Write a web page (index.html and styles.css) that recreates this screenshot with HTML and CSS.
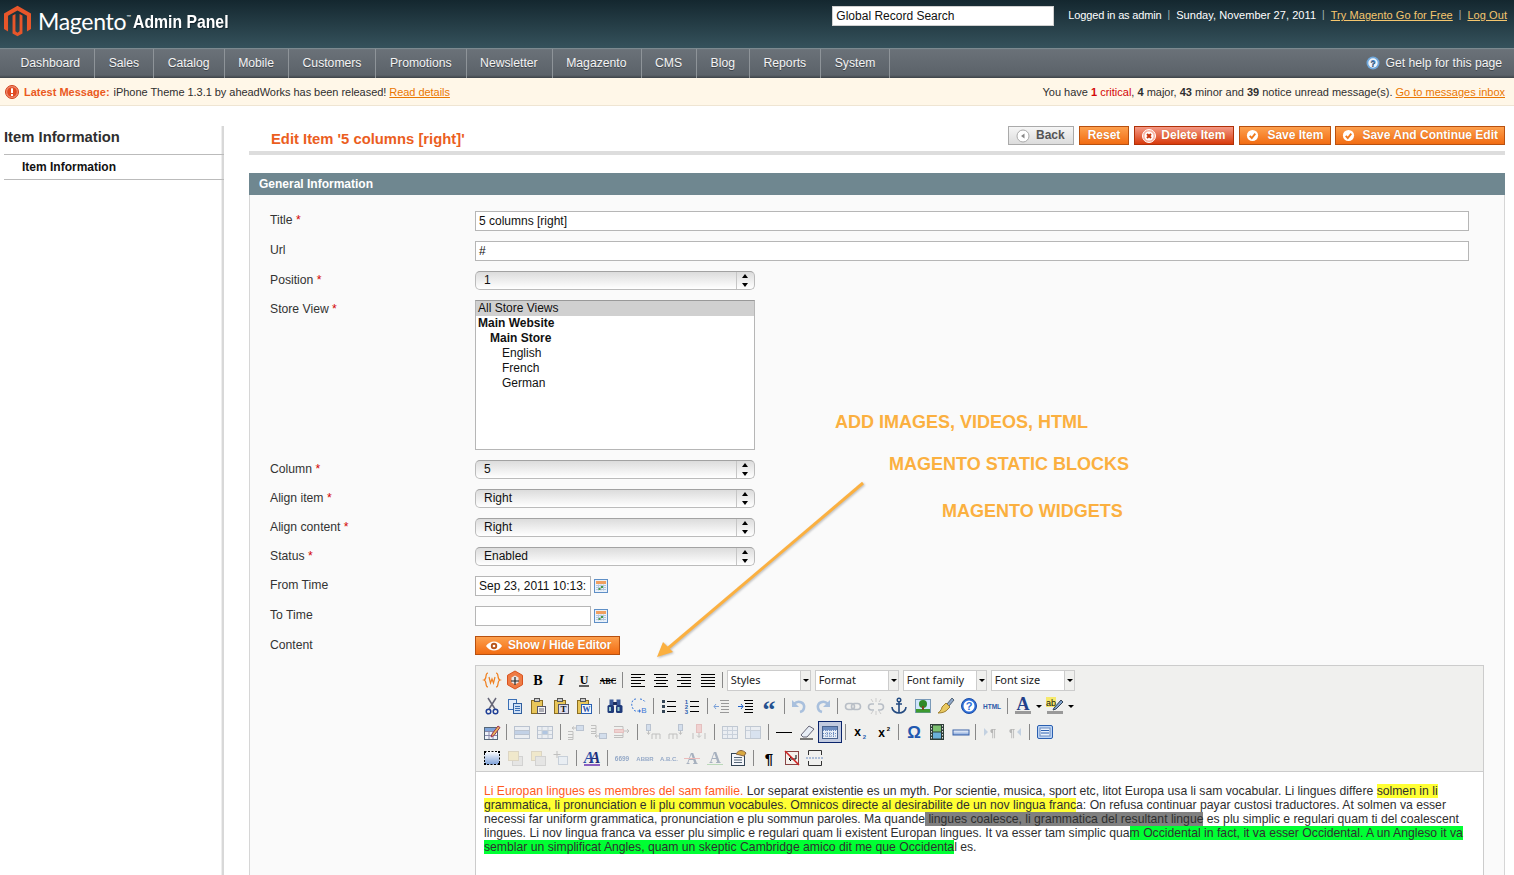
FILE: index.html
```html
<!DOCTYPE html>
<html lang="en">
<head>
<meta charset="utf-8">
<title>Magento Admin Panel</title>
<link rel="stylesheet" href="styles.css">
</head>
<body>
<svg class="sprites" width="0" height="0" aria-hidden="true">
<defs>
<linearGradient id="gb" x1="0" y1="0" x2="0" y2="1"><stop offset="0" stop-color="#ffffff"/><stop offset="1" stop-color="#7da0d8"/></linearGradient>
<symbol id="i-widget" viewBox="0 0 20 20"><g fill="none" stroke="#f08020" stroke-width="1.2"><path d="M6 3C2.500 3 5.500 9 2 10C5.500 11 2.500 17 6 17"/><path d="M14 3C17.500 3 14.500 9 18 10C14.500 11 17.500 17 14 17"/><path d="M7 7l1.500 6 1.500-4 1.500 4 1.500-6"/></g></symbol>
<symbol id="i-mage" viewBox="0 0 20 20"><path d="M10 1l7.500 4.300v9.400L10 19l-7.500-4.300V5.300z" fill="#ee7b45" stroke="#d9531e"/><path d="M10 5.500l3.500 2v5l-3.500 2-3.500-2v-5z" fill="#e8e8e8"/><path d="M10 7v8M6 11h8" stroke="#222" stroke-width="1.200"/></symbol>
<symbol id="i-b" viewBox="0 0 20 20"><text x="10" y="15" text-anchor="middle" class="g-b">B</text></symbol>
<symbol id="i-i" viewBox="0 0 20 20"><text x="10" y="15" text-anchor="middle" class="g-i">I</text></symbol>
<symbol id="i-u" viewBox="0 0 20 20"><text x="10" y="13.500" text-anchor="middle" class="g-u">U</text><path d="M5 16h10" stroke="#000" stroke-width="1.200"/></symbol>
<symbol id="i-s" viewBox="0 0 20 20"><text x="10" y="13.500" text-anchor="middle" class="g-s">ABC</text><path d="M2 10.500h16" stroke="#000"/></symbol>
<symbol id="i-al" viewBox="0 0 20 20"><path d="M3 4.500h14M3 7.500h10M3 10.500h14M3 13.500h10M3 16.500h14" stroke="#000"/></symbol>
<symbol id="i-ac" viewBox="0 0 20 20"><path d="M3 4.500h14M5 7.500h10M3 10.500h14M5 13.500h10M3 16.500h14" stroke="#000"/></symbol>
<symbol id="i-ar" viewBox="0 0 20 20"><path d="M3 4.500h14M7 7.500h10M3 10.500h14M7 13.500h10M3 16.500h14" stroke="#000"/></symbol>
<symbol id="i-aj" viewBox="0 0 20 20"><path d="M3 4.500h14M3 7.500h14M3 10.500h14M3 13.500h14M3 16.500h14" stroke="#000"/></symbol>
<symbol id="i-cut" viewBox="0 0 20 20"><path d="M6 2l7 11M14 2L7 13" stroke="#667" stroke-width="1.500"/><circle cx="6.500" cy="15.500" r="2.300" fill="none" stroke="#1f3f96" stroke-width="1.500"/><circle cx="13.500" cy="15.500" r="2.300" fill="none" stroke="#1f3f96" stroke-width="1.500"/></symbol>
<symbol id="i-copy" viewBox="0 0 20 20"><rect x="3.500" y="3.500" width="8" height="10" fill="#e3edfa" stroke="#3a6fb5"/><rect x="8.500" y="7.500" width="8" height="10" fill="#cfe0f6" stroke="#2f5e9e"/><path d="M10 10.500h5M10 12.500h5M10 14.500h5" stroke="#3a6fb5"/></symbol>
<symbol id="i-paste" viewBox="0 0 20 20"><rect x="3.500" y="4.500" width="11" height="13" fill="#e8c65a" stroke="#8a6d20"/><rect x="6.500" y="2.500" width="5" height="3" fill="#ccc" stroke="#555"/><rect x="9.500" y="10.500" width="8" height="7" fill="#f4f4f4" stroke="#556"/><path d="M11 13h5M11 15h5" stroke="#667"/></symbol>
<symbol id="i-pastet" viewBox="0 0 20 20"><rect x="3.500" y="4.500" width="11" height="13" fill="#e8c65a" stroke="#8a6d20"/><rect x="6.500" y="2.500" width="5" height="3" fill="#ccc" stroke="#555"/><rect x="7.500" y="8.500" width="10" height="9" fill="#dde" stroke="#556"/><text x="12.500" y="16" text-anchor="middle" class="g-t">T</text></symbol>
<symbol id="i-pastew" viewBox="0 0 20 20"><rect x="3.500" y="4.500" width="11" height="13" fill="#e8c65a" stroke="#8a6d20"/><rect x="6.500" y="2.500" width="5" height="3" fill="#ccc" stroke="#555"/><rect x="7.500" y="8.500" width="10" height="9" fill="#f2f6fd" stroke="#2a5fb0"/><text x="12.500" y="16" text-anchor="middle" class="g-w">W</text></symbol>
<symbol id="i-find" viewBox="0 0 20 20"><rect x="4.500" y="3.500" width="4" height="6" fill="#3a5a9a"/><rect x="11.500" y="3.500" width="4" height="6" fill="#3a5a9a"/><rect x="8" y="6" width="4" height="3" fill="#1d2f60"/><rect x="2.500" y="9" width="6.500" height="8" rx="1.500" fill="#1f3a7a"/><rect x="11" y="9" width="6.500" height="8" rx="1.500" fill="#1f3a7a"/><rect x="4" y="11" width="2" height="4" fill="#9cc"/><rect x="12.500" y="11" width="2" height="4" fill="#9cc"/></symbol>
<symbol id="i-repl" viewBox="0 0 20 20"><path d="M8 3C3 3 2 11 7 15h5M12 3c2 0 4 1 5 3" fill="none" stroke="#3a78d8" stroke-dasharray="2 1.500"/><path d="M11 13l2 2-2 2z" fill="#3a78d8"/><text x="16" y="17" text-anchor="middle" class="g-bl">B</text></symbol>
<symbol id="i-ul" viewBox="0 0 20 20"><rect x="3" y="4" width="3" height="3" fill="#345"/><rect x="3" y="9" width="3" height="3" fill="#345"/><rect x="3" y="14" width="3" height="3" fill="#345"/><path d="M8 5.500h9M8 10.500h9M8 15.500h9" stroke="#000"/></symbol>
<symbol id="i-ol" viewBox="0 0 20 20"><text x="4.500" y="8" text-anchor="middle" class="g-n">1</text><text x="4.500" y="13" text-anchor="middle" class="g-n">2</text><text x="4.500" y="18" text-anchor="middle" class="g-n">3</text><path d="M8 5.500h9M8 10.500h9M8 15.500h9" stroke="#000"/></symbol>
<symbol id="i-out" viewBox="0 0 20 20"><path d="M8 4.500h9M9 7.500h8M9 10.500h8M9 13.500h8M8 16.500h9" stroke="#999"/><path d="M7 10.500H2M4 8l-2 2.500L4 13" fill="none" stroke="#7aa0d8"/></symbol>
<symbol id="i-ind" viewBox="0 0 20 20"><path d="M8 4.500h9M9 7.500h8M9 10.500h8M9 13.500h8M8 16.500h9" stroke="#000"/><path d="M2 10.500h5M5 8l2 2.500L5 13" fill="none" stroke="#1e60c8"/></symbol>
<symbol id="i-quote" viewBox="0 0 20 20"><text x="10" y="22" text-anchor="middle" class="g-q">“</text></symbol>
<symbol id="i-undo" viewBox="0 0 20 20"><path d="M5 8c4-4 11-2 10 4-.3 2-2 3.500-4 4" fill="none" stroke="#a9c0dd" stroke-width="2.500"/><path d="M3 4v7h7z" fill="#a9c0dd"/></symbol>
<symbol id="i-redo" viewBox="0 0 20 20"><path d="M15 8C11 4 4 6 5 12c.3 2 2 3.500 4 4" fill="none" stroke="#a9c0dd" stroke-width="2.500"/><path d="M17 4v7h-7z" fill="#a9c0dd"/></symbol>
<symbol id="i-link" viewBox="0 0 20 20"><rect x="2.500" y="7.500" width="9" height="6" rx="3" fill="none" stroke="#b8bec6" stroke-width="1.600"/><rect x="8.500" y="7.500" width="9" height="6" rx="3" fill="none" stroke="#b8bec6" stroke-width="1.600"/></symbol>
<symbol id="i-unlink" viewBox="0 0 20 20"><path d="M8 8H5.500a2.500 2.500 0 0 0 0 6H8M12 8h2.500a2.500 2.500 0 0 1 0 6H12" fill="none" stroke="#b8bec6" stroke-width="1.600"/><path d="M10 2v4M5 3l2 3M15 3l-2 3M10 15v4M5 18l2-3M15 18l-2-3" stroke="#ccc"/></symbol>
<symbol id="i-anchor" viewBox="0 0 20 20"><circle cx="10" cy="4" r="1.800" fill="none" stroke="#234a80" stroke-width="1.400"/><path d="M10 6v11M7 8h6M3 11c0 4 4 6 7 6s7-2 7-6" fill="none" stroke="#234a80" stroke-width="1.600"/></symbol>
<symbol id="i-image" viewBox="0 0 20 20"><rect x="2.500" y="3.500" width="15" height="13" fill="#cfe6fb" stroke="#7a9ab8"/><rect x="3" y="13" width="14" height="3.500" fill="#3c9a30"/><circle cx="10" cy="8" r="4" fill="#2f8a25"/><rect x="9" y="10" width="2" height="4" fill="#7a4a20"/></symbol>
<symbol id="i-clean" viewBox="0 0 20 20"><path d="M11 8l5-6 2 2-5 6z" fill="#8fa7c8" stroke="#567"/><path d="M10 7l4 4-2 2c-2 3-6 4-10 4 3-2 4-5 4-6z" fill="#e8c860" stroke="#a08030"/></symbol>
<symbol id="i-help" viewBox="0 0 20 20"><circle cx="10" cy="10" r="7.500" fill="#2f6fd8" stroke="#1c4ea8"/><circle cx="10" cy="10" r="5.500" fill="#fff"/><text x="10" y="14" text-anchor="middle" class="g-h">?</text></symbol>
<symbol id="i-html" viewBox="0 0 20 20"><text x="10" y="12.500" text-anchor="middle" class="g-html">HTML</text></symbol>
<symbol id="i-fore" viewBox="0 0 20 20"><text x="10" y="14" text-anchor="middle" class="g-a">A</text><rect x="2" y="15" width="16" height="3" fill="#999"/></symbol>
<symbol id="i-back" viewBox="0 0 20 20"><rect x="1" y="1" width="10" height="10" fill="#f6e96c"/><text x="6" y="9.500" text-anchor="middle" class="g-ab">ab</text><path d="M9 12l7-8 2 2-7 7-3 1z" fill="#7fa3cf" stroke="#345"/><rect x="2" y="15" width="16" height="3" fill="#999"/></symbol>
<symbol id="i-table" viewBox="0 0 20 20"><rect x="2.500" y="5.500" width="13" height="12" fill="#eef3fa" stroke="#567"/><path d="M3 9.500h12M3 13.500h12M7 6v11M11 6v11" stroke="#88a"/><rect x="3" y="6" width="12" height="3" fill="#7ea4d8"/><path d="M10 12l6-8 2 1.500-6 8-3 1.500z" fill="#e8b458" stroke="#935"/></symbol>
<symbol id="i-rowp" viewBox="0 0 20 20"><rect x="2.500" y="4.500" width="15" height="12" fill="#e8eef6" stroke="#8fa0b8"/><rect x="3" y="8.500" width="14" height="4" fill="#9db8e0"/><path d="M3 8.500h14M3 12.500h14" stroke="#8fa0b8"/></symbol>
<symbol id="i-cellp" viewBox="0 0 20 20"><rect x="2.500" y="4.500" width="15" height="12" fill="#e8eef6" stroke="#8fa0b8"/><rect x="7" y="8.500" width="6" height="4" fill="#7ea4d8"/><path d="M3 8.500h14M3 12.500h14M7 5v11M13 5v11" stroke="#a8b6c8"/></symbol>
<symbol id="i-rb" viewBox="0 0 20 20"><rect x="10.500" y="3.500" width="7" height="5" fill="#bcd0ec" stroke="#8fa0b8"/><path d="M10 6H6M8 4.500L6 6l2 1.500" fill="none" stroke="#999"/><path d="M2 9.500h5v3H2m0 0h5v3H2m0 0h5v2H2" fill="none" stroke="#999"/></symbol>
<symbol id="i-ra" viewBox="0 0 20 20"><path d="M2 3.500h5v3H2m0 0h5v3H2m0 0h5v2H2" fill="none" stroke="#999"/><path d="M10 14H6M8 12.500L6 14l2 1.500" fill="none" stroke="#999"/><rect x="10.500" y="11.500" width="7" height="5" fill="#bcd0ec" stroke="#8fa0b8"/></symbol>
<symbol id="i-rd" viewBox="0 0 20 20"><path d="M2 4.500h9v3H2m0 3h9v3H2m0 0h9v2H2" fill="none" stroke="#999"/><rect x="2.500" y="7.500" width="9" height="3" fill="#f0b8b8" stroke="#d99"/><path d="M12 9h5M15 7l2 2-2 2" fill="none" stroke="#999"/></symbol>
<symbol id="i-cb" viewBox="0 0 20 20"><rect x="3.500" y="2.500" width="4" height="6" fill="#bcd0ec" stroke="#8fa0b8"/><path d="M5.500 9v3M4 10.500l1.500 2 1.500-2" fill="none" stroke="#999"/><path d="M9 17v-5h8v5M13 12v5" fill="none" stroke="#999"/></symbol>
<symbol id="i-ca" viewBox="0 0 20 20"><rect x="12.500" y="2.500" width="4" height="6" fill="#bcd0ec" stroke="#8fa0b8"/><path d="M14.500 9v3M13 10.500l1.500 2 1.500-2" fill="none" stroke="#999"/><path d="M3 17v-5h8v5M7 12v5" fill="none" stroke="#999"/></symbol>
<symbol id="i-cd" viewBox="0 0 20 20"><rect x="7.500" y="2.500" width="5" height="8" fill="#f0b8b8" stroke="#d99"/><path d="M10 11v4M8 13.500l2 2 2-2M4 11v6M16 11v6" fill="none" stroke="#999"/></symbol>
<symbol id="i-split" viewBox="0 0 20 20"><rect x="2.500" y="4.500" width="15" height="12" fill="#e8eef6" stroke="#9aa8bc"/><path d="M3 8.500h14M3 12.500h14M7.500 5v11M12.500 5v11" stroke="#aab8cc"/></symbol>
<symbol id="i-merge" viewBox="0 0 20 20"><rect x="2.500" y="4.500" width="15" height="12" fill="#e8eef6" stroke="#9aa8bc"/><rect x="7" y="8" width="10" height="8" fill="#c6d8f0"/><path d="M3 8.500h14M7.500 5v11" stroke="#aab8cc"/></symbol>
<symbol id="i-hr" viewBox="0 0 20 20"><path d="M2 10.500h16" stroke="#000"/></symbol>
<symbol id="i-erase" viewBox="0 0 20 20"><path d="M4 13l8-9 5 3-7 8H6z" fill="#e8eef6" stroke="#667"/><path d="M3 17h13" stroke="#000"/></symbol>
<symbol id="i-visual" viewBox="0 0 20 20"><rect x="2.500" y="4.500" width="15" height="12" fill="#e8eef6" stroke="#48638f"/><rect x="3" y="5" width="14" height="3" fill="#6c8cc0"/><path d="M3 8.500h14M3 11.500h14M3 14h14M7 8v8M10 8v8M13.500 8v8" stroke="#6c8cc0" stroke-dasharray="1 1"/></symbol>
<symbol id="i-sub" viewBox="0 0 20 20"><text x="7.500" y="14" text-anchor="middle" class="g-x">x</text><text x="14.500" y="17" text-anchor="middle" class="g-sm">2</text></symbol>
<symbol id="i-sup" viewBox="0 0 20 20"><text x="7.500" y="15" text-anchor="middle" class="g-x">x</text><text x="14.500" y="9" text-anchor="middle" class="g-smk">2</text></symbol>
<symbol id="i-omega" viewBox="0 0 20 20"><text x="10" y="15.500" text-anchor="middle" class="g-o">Ω</text></symbol>
<symbol id="i-film" viewBox="0 0 20 20"><rect x="3" y="2" width="14" height="16" fill="#2e3e38"/><rect x="6" y="3.500" width="8" height="6" fill="#7cc070"/><rect x="6" y="10.500" width="8" height="6" fill="#6ab0d8"/><path d="M4.500 3v14M15.500 3v14" stroke="#ddd" stroke-dasharray="1.500 1.500"/></symbol>
<symbol id="i-rule" viewBox="0 0 20 20"><rect x="2" y="8" width="16" height="5" fill="url(#gb)" stroke="#3a63a8"/></symbol>
<symbol id="i-ltr" viewBox="0 0 20 20"><text x="12" y="14.500" text-anchor="middle" class="g-pg">¶</text><path d="M3 6l4 4-4 4z" fill="#9fb8d8"/></symbol>
<symbol id="i-rtl" viewBox="0 0 20 20"><text x="8" y="14.500" text-anchor="middle" class="g-pg">¶</text><path d="M17 6l-4 4 4 4z" fill="#9fb8d8"/></symbol>
<symbol id="i-box" viewBox="0 0 20 20"><rect x="2.500" y="3.500" width="15" height="13" rx="1.500" fill="#bcd4f4" stroke="#2a5fb0"/><rect x="5" y="6" width="10" height="8" fill="#eaf2fc" stroke="#6c8cc0"/><path d="M6 8.500h8M6 11h8" stroke="#2a5fb0"/></symbol>
<symbol id="i-full" viewBox="0 0 20 20"><rect x="2.500" y="3.500" width="15" height="13" fill="url(#gb)" stroke="#000" stroke-dasharray="2 1.500"/><path d="M2 3h2v2H2zM16 3h2v2h-2zM2 15h2v2H2zM16 15h2v2h-2z" fill="#000"/></symbol>
<symbol id="i-lf" viewBox="0 0 20 20"><rect x="7.500" y="8.500" width="10" height="9" fill="#ddd" stroke="#bbb"/><rect x="3.500" y="3.500" width="10" height="9" fill="#f0e2b0" stroke="#ccc0a0"/></symbol>
<symbol id="i-lb" viewBox="0 0 20 20"><rect x="3.500" y="3.500" width="10" height="9" fill="#f0e2b0" stroke="#ccc0a0"/><rect x="7.500" y="8.500" width="10" height="9" fill="#ddd" stroke="#bbb"/></symbol>
<symbol id="i-abs" viewBox="0 0 20 20"><path d="M6 3v7M2.500 6.500h7" stroke="#999"/><rect x="7.500" y="8.500" width="9" height="8" fill="#e4edf8" stroke="#a8b6c8"/></symbol>
<symbol id="i-style" viewBox="0 0 20 20"><text x="7" y="15" text-anchor="middle" class="g-st1">A</text><text x="13" y="15" text-anchor="middle" class="g-st2">A</text><path d="M2 17h16" stroke="#6a30b0" stroke-width="1.500"/></symbol>
<symbol id="i-cite" viewBox="0 0 20 20"><text x="10" y="13" text-anchor="middle" class="g-cap">6699</text></symbol>
<symbol id="i-abbr" viewBox="0 0 20 20"><text x="10" y="12.500" text-anchor="middle" class="g-cap2">ABBR</text></symbol>
<symbol id="i-acr" viewBox="0 0 20 20"><text x="10" y="12.500" text-anchor="middle" class="g-cap2">A.B.C.</text></symbol>
<symbol id="i-del" viewBox="0 0 20 20"><text x="10" y="15.500" text-anchor="middle" class="g-ga">A</text><path d="M2 10.500h16" stroke="#e89090"/></symbol>
<symbol id="i-ins" viewBox="0 0 20 20"><text x="10" y="15" text-anchor="middle" class="g-ga">A</text><path d="M2 16.500h16" stroke="#90c890"/></symbol>
<symbol id="i-attr" viewBox="0 0 20 20"><rect x="3.500" y="5.500" width="13" height="12" fill="#f4f6fa" stroke="#345"/><path d="M6 9.500h8M6 12h8M6 14.500h8" stroke="#567"/><path d="M8 6c3-5 7-4 10-1l-2 3z" fill="#d8a840" stroke="#864"/></symbol>
<symbol id="i-para" viewBox="0 0 20 20"><text x="10" y="16" text-anchor="middle" class="g-p">¶</text></symbol>
<symbol id="i-nb" viewBox="0 0 20 20"><rect x="3.500" y="3.500" width="13" height="13" fill="#f4f0ec" stroke="#844"/><path d="M14 7v4H7M9 9l-2 2 2 2" fill="none" stroke="#000"/><path d="M3 3l14 14" stroke="#d02020" stroke-width="1.500"/></symbol>
<symbol id="i-break" viewBox="0 0 20 20"><path d="M3.500 7V2.500h13V7M3.500 13v4.500h13V13" fill="none" stroke="#333"/><path d="M1 10h18" stroke="#6c8cc0" stroke-dasharray="2 1"/></symbol>
<symbol id="i-cal" viewBox="0 0 14 14"><rect x=".5" y=".5" width="13" height="13" fill="#eaf1fa" stroke="#5f8fc6"/><rect x="2" y="2" width="10" height="3" fill="#f0a060"/><path d="M2 6.500h10M2 8.500h10M2 10.500h10M4.500 5.500v6M7 5.500v6M9.500 5.500v6" stroke="#b4c8dc"/><rect x="7" y="7" width="2" height="2" fill="#4a9a48"/><rect x="4.500" y="9" width="2" height="2" fill="#4a9a48"/></symbol>
<symbol id="i-ok" viewBox="0 0 14 14"><circle cx="7" cy="7" r="6" fill="#fff"/><path d="M4 7.500l2.200 2.200L10 5" fill="none" stroke="#f07a1e" stroke-width="2"/></symbol>
</defs>
</svg>

<header class="topbar">
  <div class="brand">
    <svg class="brand-mark" viewBox="0 0 30 34" width="27" height="32" aria-hidden="true"><path d="M15 0l15 8.600V26l-4.500 2.600V11.200L15 5.200 4.500 11.200v17.400L0 26V8.600z" fill="#e8562a"/><path d="M15 34l-5.500-3V11l3.200-1.800v19.300L15 30l2.300-1.500V9.200l3.200 1.800v20z" fill="#e8562a"/></svg>
    <span class="brand-name">Magento<sup class="tm">™</sup></span>
    <span class="brand-sub">Admin Panel</span>
  </div>
  <div class="top-right">
    <div class="search-box">Global Record Search</div>
    <div class="top-links">
      <span class="tight">Logged in as admin</span><i class="pipe">|</i><span>Sunday, November 27, 2011</span><i class="pipe">|</i><a href="#">Try Magento Go for Free</a><i class="pipe">|</i><a href="#">Log Out</a>
    </div>
  </div>
</header>

<nav class="navbar">
  <ul class="menu">
    <li>Dashboard</li><li>Sales</li><li>Catalog</li><li>Mobile</li><li>Customers</li><li>Promotions</li><li>Newsletter</li><li>Magazento</li><li>CMS</li><li>Blog</li><li>Reports</li><li>System</li>
  </ul>
  <div class="nav-help">
    <svg viewBox="0 0 14 14" width="14" height="14" aria-hidden="true"><circle cx="7" cy="7" r="6.500" fill="#6fa8dc"/><circle cx="7" cy="7" r="4.700" fill="#eef4fb"/><text x="7" y="10.300" text-anchor="middle" class="g-help">?</text></svg>
    <span>Get help for this page</span>
  </div>
</nav>

<div class="notice">
  <div class="notice-left">
    <svg viewBox="0 0 14 14" width="14" height="14" aria-hidden="true"><circle cx="7" cy="7" r="6.500" fill="#f08a70" stroke="#d0421c"/><circle cx="7" cy="7" r="4.800" fill="#e04a22"/><rect x="6" y="3.300" width="2" height="4.700" fill="#fff"/><rect x="6" y="9" width="2" height="2" fill="#fff"/></svg>
    <b class="latest">Latest Message:</b>
    <span>iPhone Theme 1.3.1 by aheadWorks has been released!</span>
    <a href="#">Read details</a>
  </div>
  <div class="notice-right">
    You have <b class="crit">1</b> <span class="crit">critical</span>, <b>4</b> major, <b>43</b> minor and <b>39</b> notice unread message(s). <a href="#">Go to messages inbox</a>
  </div>
</div>

<div class="layout">
  <aside class="sidebar">
    <h3 class="side-title">Item Information</h3>
    <div class="side-item">Item Information</div>
  </aside>

  <main class="main">
    <div class="page-head">
      <h1 class="page-title">Edit Item '5 columns [right]'</h1>
      <div class="actions">
        <button class="btn btn-back" type="button"><svg viewBox="0 0 14 14" width="14" height="14" aria-hidden="true"><circle cx="7" cy="7" r="6" fill="#fff" stroke="#aaa"/><path d="M8.500 4.500v5L5 7z" fill="#888"/></svg>Back</button>
        <button class="btn btn-reset" type="button">Reset</button>
        <button class="btn btn-del" type="button"><svg viewBox="0 0 14 14" width="14" height="14" aria-hidden="true"><circle cx="7" cy="7" r="6.500" fill="#f8b0a0" stroke="#fff"/><circle cx="7" cy="7" r="4.500" fill="#fff"/><path d="M5 5l4 4M9 5l-4 4" stroke="#c8340c" stroke-width="2"/></svg>Delete Item</button>
        <button class="btn btn-ico" type="button"><svg width="13" height="13" aria-hidden="true"><use href="#i-ok"/></svg>Save Item</button>
        <button class="btn btn-ico btn-last" type="button"><svg width="13" height="13" aria-hidden="true"><use href="#i-ok"/></svg>Save And Continue Edit</button>
      </div>
    </div>

    <section class="section">
      <h2 class="section-title">General Information</h2>
      <div class="fieldset">
        <div class="row"><label class="lbl">Title <em>*</em></label><div class="field input wide">5 columns [right]</div></div>
        <div class="row"><label class="lbl">Url</label><div class="field input wide">#</div></div>
        <div class="row r-sel"><label class="lbl">Position <em>*</em></label><div class="field select"><span>1</span><i class="updown"></i></div></div>
        <div class="row r-multi"><label class="lbl">Store View <em>*</em></label>
          <div class="field multi">
            <div class="opt sel">All Store Views</div>
            <div class="opt bold">Main Website</div>
            <div class="opt bold in1">Main Store</div>
            <div class="opt in2">English</div>
            <div class="opt in2">French</div>
            <div class="opt in2">German</div>
          </div>
        </div>
        <div class="row r-sel"><label class="lbl">Column <em>*</em></label><div class="field select"><span>5</span><i class="updown"></i></div></div>
        <div class="row r-sel"><label class="lbl">Align item <em>*</em></label><div class="field select"><span>Right</span><i class="updown"></i></div></div>
        <div class="row r-sel"><label class="lbl">Align content <em>*</em></label><div class="field select"><span>Right</span><i class="updown"></i></div></div>
        <div class="row r-sel"><label class="lbl">Status <em>*</em></label><div class="field select"><span>Enabled</span><i class="updown"></i></div></div>
        <div class="row"><label class="lbl">From Time</label><div class="field input date">Sep 23, 2011 10:13:</div><svg class="cal" width="14" height="14" aria-hidden="true"><use href="#i-cal"/></svg></div>
        <div class="row"><label class="lbl">To Time</label><div class="field input date"></div><svg class="cal" width="14" height="14" aria-hidden="true"><use href="#i-cal"/></svg></div>
        <div class="row r-sel"><label class="lbl">Content</label>
          <button class="btn btn-editor" type="button"><svg viewBox="0 0 18 12" width="18" height="12" aria-hidden="true"><path d="M1 6c4-6 12-6 16 0-4 6-12 6-16 0z" fill="#fff"/><circle cx="9" cy="6" r="3.200" fill="#b8541a"/><circle cx="9" cy="6" r="1.300" fill="#fff"/></svg>Show / Hide Editor</button>
        </div>
        <div class="row r-editor"><span class="lbl"></span>
          <div class="editor">
            <div class="toolbar">
              <div class="tb-row">
                <span class="ti"><svg><use href="#i-widget"/></svg></span><span class="ti"><svg><use href="#i-mage"/></svg></span><span class="ti"><svg><use href="#i-b"/></svg></span><span class="ti"><svg><use href="#i-i"/></svg></span><span class="ti"><svg><use href="#i-u"/></svg></span><span class="ti"><svg><use href="#i-s"/></svg></span><i class="sep"></i>
                <span class="ti"><svg><use href="#i-al"/></svg></span><span class="ti"><svg><use href="#i-ac"/></svg></span><span class="ti"><svg><use href="#i-ar"/></svg></span><span class="ti"><svg><use href="#i-aj"/></svg></span><i class="sep"></i>
                <span class="combo"><span class="combo-text">Styles</span><i class="combo-arrow"></i></span><span class="combo"><span class="combo-text">Format</span><i class="combo-arrow"></i></span><span class="combo"><span class="combo-text">Font family</span><i class="combo-arrow"></i></span><span class="combo"><span class="combo-text">Font size</span><i class="combo-arrow"></i></span>
              </div>
              <div class="tb-row">
                <span class="ti"><svg><use href="#i-cut"/></svg></span><span class="ti"><svg><use href="#i-copy"/></svg></span><span class="ti"><svg><use href="#i-paste"/></svg></span><span class="ti"><svg><use href="#i-pastet"/></svg></span><span class="ti"><svg><use href="#i-pastew"/></svg></span><i class="sep"></i>
                <span class="ti"><svg><use href="#i-find"/></svg></span><span class="ti"><svg><use href="#i-repl"/></svg></span><i class="sep"></i>
                <span class="ti"><svg><use href="#i-ul"/></svg></span><span class="ti"><svg><use href="#i-ol"/></svg></span><i class="sep"></i>
                <span class="ti"><svg><use href="#i-out"/></svg></span><span class="ti"><svg><use href="#i-ind"/></svg></span><span class="ti"><svg><use href="#i-quote"/></svg></span><i class="sep"></i>
                <span class="ti"><svg><use href="#i-undo"/></svg></span><span class="ti"><svg><use href="#i-redo"/></svg></span><i class="sep"></i>
                <span class="ti"><svg><use href="#i-link"/></svg></span><span class="ti"><svg><use href="#i-unlink"/></svg></span><span class="ti"><svg><use href="#i-anchor"/></svg></span><span class="ti"><svg><use href="#i-image"/></svg></span><span class="ti"><svg><use href="#i-clean"/></svg></span><span class="ti"><svg><use href="#i-help"/></svg></span><span class="ti"><svg><use href="#i-html"/></svg></span><i class="sep"></i>
                <span class="ti split"><svg><use href="#i-fore"/></svg><i class="drop"></i></span><span class="ti split"><svg><use href="#i-back"/></svg><i class="drop"></i></span>
              </div>
              <div class="tb-row">
                <span class="ti"><svg><use href="#i-table"/></svg></span><i class="sep"></i>
                <span class="ti off"><svg><use href="#i-rowp"/></svg></span><span class="ti off"><svg><use href="#i-cellp"/></svg></span><i class="sep"></i>
                <span class="ti off"><svg><use href="#i-rb"/></svg></span><span class="ti off"><svg><use href="#i-ra"/></svg></span><span class="ti off"><svg><use href="#i-rd"/></svg></span><i class="sep"></i>
                <span class="ti off"><svg><use href="#i-cb"/></svg></span><span class="ti off"><svg><use href="#i-ca"/></svg></span><span class="ti off"><svg><use href="#i-cd"/></svg></span><i class="sep"></i>
                <span class="ti off"><svg><use href="#i-split"/></svg></span><span class="ti off"><svg><use href="#i-merge"/></svg></span><i class="sep"></i>
                <span class="ti"><svg><use href="#i-hr"/></svg></span><span class="ti"><svg><use href="#i-erase"/></svg></span><span class="ti active"><svg><use href="#i-visual"/></svg></span><i class="sep"></i>
                <span class="ti"><svg><use href="#i-sub"/></svg></span><span class="ti"><svg><use href="#i-sup"/></svg></span><i class="sep"></i>
                <span class="ti"><svg><use href="#i-omega"/></svg></span><span class="ti"><svg><use href="#i-film"/></svg></span><span class="ti"><svg><use href="#i-rule"/></svg></span><i class="sep"></i>
                <span class="ti off"><svg><use href="#i-ltr"/></svg></span><span class="ti off"><svg><use href="#i-rtl"/></svg></span><i class="sep"></i>
                <span class="ti"><svg><use href="#i-box"/></svg></span>
              </div>
              <div class="tb-row">
                <span class="ti"><svg><use href="#i-full"/></svg></span><span class="ti off"><svg><use href="#i-lf"/></svg></span><span class="ti off"><svg><use href="#i-lb"/></svg></span><span class="ti off"><svg><use href="#i-abs"/></svg></span><i class="sep"></i>
                <span class="ti"><svg><use href="#i-style"/></svg></span><i class="sep"></i>
                <span class="ti off"><svg><use href="#i-cite"/></svg></span><span class="ti off"><svg><use href="#i-abbr"/></svg></span><span class="ti off"><svg><use href="#i-acr"/></svg></span><span class="ti off"><svg><use href="#i-del"/></svg></span><span class="ti off"><svg><use href="#i-ins"/></svg></span><span class="ti"><svg><use href="#i-attr"/></svg></span><i class="sep"></i>
                <span class="ti"><svg><use href="#i-para"/></svg></span><span class="ti"><svg><use href="#i-nb"/></svg></span><span class="ti"><svg><use href="#i-break"/></svg></span>
              </div>
            </div>
            <div class="editor-body">
<span class="t-red">Li Europan lingues es membres del sam familie.</span> Lor separat existentie es un myth. Por scientie, musica, sport etc, litot Europa usa li sam vocabular. Li lingues differe <span class="t-yel">solmen in li</span><br>
<span class="t-yel">grammatica, li pronunciation e li plu commun vocabules. Omnicos directe al desirabilite de un nov lingua franc</span>a: On refusa continuar payar custosi traductores. At solmen va esser<br>
necessi far uniform grammatica, pronunciation e plu sommun paroles. Ma quande<span class="t-gry"> lingues coalesce, li grammatica del resultant lingue</span> es plu simplic e regulari quam ti del coalescent<br>
lingues. Li nov lingua franca va esser plu simplic e regulari quam li existent Europan lingues. It va esser tam simplic qua<span class="t-grn">m Occidental in fact, it va esser Occidental. A un Angleso it va</span><br>
<span class="t-grn">semblar un simplificat Angles, quam un skeptic Cambridge amico dit me que Occidenta</span>l es.
            </div>
          </div>
        </div>
      </div>
    </section>
  </main>
</div>

<div class="note n1">ADD IMAGES, VIDEOS, HTML</div>
<div class="note n2">MAGENTO STATIC BLOCKS</div>
<div class="note n3">MAGENTO WIDGETS</div>
<svg class="arrow" width="240" height="200" viewBox="640 470 240 200" aria-hidden="true"><path d="M863 483L666 650" stroke="#fbb040" stroke-width="3" fill="none"/><path d="M657 657l6-15 10 10z" fill="#fbb040"/></svg>
</body>
</html>
```

FILE: styles.css
```css
* { box-sizing: border-box; }
html, body { margin: 0; padding: 0; }
body {
  position: relative;
  width: 1514px;
  height: 875px;
  overflow: hidden;
  background: #fff;
  color: #2f2f2f;
  font: 12px/14px "Liberation Sans", Arial, sans-serif;
  display: flex;
  flex-direction: column;
}
.sprites { position: absolute; }
a { color: #ea7601; text-decoration: underline; }

/* Glyphs inside toolbar icons */
.g-b { font: bold 14px "Liberation Serif", serif; fill: #000; }
.g-i { font: italic bold 14px "Liberation Serif", serif; fill: #000; }
.g-u { font: bold 12px "Liberation Serif", serif; fill: #000; }
.g-s { font: bold 8px "Liberation Serif", serif; fill: #000; }
.g-t { font: bold 9px "Liberation Serif", serif; fill: #111; }
.g-w { font: bold 8px "Liberation Serif", serif; fill: #1d50a8; }
.g-bl { font: 8px "Liberation Sans", sans-serif; fill: #3a78d8; }
.g-n { font: bold 6px "Liberation Sans", sans-serif; fill: #2a5fb0; }
.g-q { font: bold 26px "Liberation Serif", serif; fill: #23508f; }
.g-h { font: bold 11px "Liberation Sans", sans-serif; fill: #2f6fd8; }
.g-html { font: bold 6.500px "Liberation Sans", sans-serif; fill: #2d5aa8; }
.g-a { font: bold 18px "Liberation Serif", serif; fill: #23408a; }
.g-ab { font: 9px "Liberation Sans", sans-serif; fill: #111; }
.g-x { font: bold 12px "Liberation Sans", sans-serif; fill: #000; }
.g-sm { font: bold 6px "Liberation Sans", sans-serif; fill: #2a5fb0; }
.g-smk { font: bold 6px "Liberation Sans", sans-serif; fill: #000; }
.g-o { font: bold 17px "Liberation Sans", sans-serif; fill: #1f58b0; }
.g-pg { font: bold 11px "Liberation Sans", sans-serif; fill: #888; }
.g-st1 { font: italic bold 16px "Liberation Serif", serif; fill: #2a4ea8; }
.g-st2 { font: italic bold 16px "Liberation Serif", serif; fill: #1d2e78; }
.g-cap { font: bold 6.500px "Liberation Sans", sans-serif; fill: #4a6fa8; }
.g-cap2 { font: bold 6px "Liberation Sans", sans-serif; fill: #4a6fa8; }
.g-ga { font: bold 16px "Liberation Serif", serif; fill: #6a7c98; }
.g-p { font: bold 15px "Liberation Sans", sans-serif; fill: #000; }
.g-help { font: bold 9px "Liberation Sans", sans-serif; fill: #3f7fc0; }

/* Top header */
.topbar {
  flex: none;
  height: 48px;
  display: flex;
  justify-content: space-between;
  background: linear-gradient(#14272f, #35525c);
  color: #fff;
}
.brand { display: flex; align-items: flex-start; padding: 5px 0 0 4px; }
.brand-mark { flex: none; }
.brand-name {
  margin: 3px 0 0 7px;
  width: 91px;
  font: 23px/26px "Lato", "Liberation Sans", sans-serif;
  letter-spacing: -.3px;
}
.tm { font-size: 6px; line-height: 0; vertical-align: 11px; }
.brand-sub {
  margin: 6px 0 0 4px;
  font: bold 19px/22px "Liberation Sans", sans-serif;
  transform: scaleX(.83);
  transform-origin: left center;
  text-shadow: 1px 1px 1px #10202a;
}
.top-right { display: flex; align-items: flex-start; padding: 6px 7px 0 0; }
.search-box {
  width: 222px;
  height: 20px;
  padding: 2px 3px;
  background: #fff;
  border: 1px solid #d0d0d0;
  color: #111;
  font-size: 12px;
  margin-right: 14px;
}
.top-links { display: flex; font-size: 11px; line-height: 18px; font-weight: 500; letter-spacing: .06px; }
.top-links .tight { letter-spacing: -.16px; }
.top-links a { color: #f5c66e; }
.pipe { font-style: normal; margin: 0 6px; color: #a8b8bd; font-size: 10px; }

/* Menu */
.navbar {
  flex: none;
  height: 30px;
  display: flex;
  justify-content: space-between;
  background: linear-gradient(#6e767d 0, #6a7178 4%, #5b6269 90%, #3c4247 100%);
  border-top: 1px solid #7c8a90;
  color: #f4f4f4;
  font-size: 12.200px;
  line-height: 28px;
  padding-left: 7px;
  text-shadow: 0 1px 0 #3e444a;
}
.menu { list-style: none; margin: 0; padding: 0; display: flex; }
.menu li { padding: 0 14px 0 13.500px; border-right: 1px solid #8e9499; }
.nav-help { display: flex; align-items: center; gap: 5px; padding: 0 12px 2px 0; }

/* Notice */
.notice {
  flex: none;
  height: 28px;
  display: flex;
  justify-content: space-between;
  align-items: center;
  padding: 0 9px 0 5px;
  background: #fff7e8;
  border-bottom: 1px solid #efe5d3;
  font-size: 11px;
}
.notice-left { display: flex; align-items: center; }
.notice-left svg { margin-right: 5px; }
.notice-left span { margin: 0 3px 0 4px; letter-spacing: -.04px; }
.notice-left a { letter-spacing: -.05px; }
.latest { color: #ea5a1e; }
.crit { color: #d40707; }

/* Page layout */
.layout { flex: 1; min-height: 0; display: flex; padding: 0 9px 0 4px; }
.sidebar {
  flex: none;
  width: 220px;
  margin-top: 20px;
  border-right: 2px solid #d8d8d8;
  box-shadow: inset -1px 0 0 #eee;
}
.side-title {
  margin: 0 -2px 0 0;
  height: 29px;
  font: bold 14.800px/22px "Liberation Sans", sans-serif;
  color: #2f2f2f;
  border-bottom: 1px solid #bbb;
}
.side-item {
  margin-right: -2px;
  height: 25px;
  padding-left: 18px;
  font: bold 12px/24px "Liberation Sans", sans-serif;
  color: #111;
  border-bottom: 1px solid #bbb;
}
.main { flex: 1; min-width: 0; margin-left: 25px; padding-top: 20px; }
.page-head {
  height: 29px;
  display: flex;
  justify-content: space-between;
  align-items: flex-start;
  border-bottom: 4px solid #ddd;
  padding-left: 22px;
}
.page-title { margin: 4px 0 0; font: bold 14.800px/18px "Liberation Sans", sans-serif; color: #eb5e1e; }
.actions { display: flex; gap: 5px; }

/* Buttons */
.btn {
  height: 19px;
  display: inline-flex;
  align-items: center;
  gap: 6px;
  padding: 0 7px 1px;
  background: linear-gradient(#fda04e, #f26c12);
  border: 1px solid #b8500f;
  color: #fff;
  font: bold 12px/16px "Liberation Sans", sans-serif;
  text-shadow: 0 0 1px #c85e10;
}
.btn svg { margin-top: 1px; }
.btn-back { background: linear-gradient(#f6f6f6, #dcdcdc); border-color: #aaa; color: #555; text-shadow: none; padding: 0 8px 1px 7px; }
.btn-reset { padding: 0 8px 1px; }
.btn-del { background: linear-gradient(#f49a86, #d83a0c); border-color: #b03008; padding: 0 8px 1px 7px; gap: 5px; }
.btn-ico { gap: 8px; padding: 0 7px 1px 6px; }
.btn-last { gap: 7px; margin-left: -1px; padding: 0 6px 1px 6px; }
.btn-editor { width: 145px; gap: 5px; padding: 0 0 1px 9px; letter-spacing: -.15px; }

/* Section */
.section { margin-top: 18px; }
.section-title {
  margin: 0;
  height: 22px;
  padding-left: 10px;
  background: #6f8790;
  color: #fff;
  font: bold 12px/22px "Liberation Sans", sans-serif;
}
.fieldset {
  display: flex;
  flex-direction: column;
  gap: 10px;
  padding: 16px 20px 0 20px;
  height: 680px;
  background: #fafafa;
  border: 1px solid #d6d6d6;
  border-width: 0 1px;
}
.row { display: flex; align-items: flex-start; height: 20px; flex: none; }
.row.r-sel { height: 19px; }
.row.r-multi { height: 150px; }
.row.r-editor { height: auto; }
.lbl { flex: none; width: 205px; color: #333; line-height: 18px; font-size: 12.200px; }
.lbl em { color: #d40707; font-style: normal; }
.field { color: #111; background: #fff; }
.input {
  height: 20px;
  padding: 2px 3px;
  border: 1px solid #b6b6b6;
  white-space: nowrap;
  overflow: hidden;
}
.wide { width: 994px; }
.date { width: 116px; }
.cal { margin: 3px 0 0 3px; }
.select {
  width: 280px;
  height: 19px;
  display: flex;
  justify-content: space-between;
  padding-left: 8px;
  line-height: 16px;
  border: 1px solid #bbb;
  border-top-color: #a2a2a2;
  border-radius: 5px;
  background: linear-gradient(#dcdcdc, #f3f3f3 65%, #ffffff);
}
.updown {
  position: relative;
  width: 18px;
  border-left: 1px solid #c6c6c6;
}
.updown::before, .updown::after {
  content: "";
  position: absolute;
  left: 5px;
  border: 3px solid transparent;
  border-left-width: 3px;
}
.updown::before { top: -1px; border-bottom: 4px solid #000; }
.updown::after { bottom: -1px; border-top: 4px solid #000; }
.multi { width: 280px; height: 150px; border: 1px solid #b6b6b6; border-top-color: #999; line-height: 15px; }
.opt { height: 15px; padding-left: 2px; }
.opt.sel { background: #d0d0d0; }
.opt.bold { font-weight: bold; }
.opt.in1 { padding-left: 14px; }
.opt.in2 { padding-left: 26px; }

/* Editor */
.editor { width: 1009px; }
.toolbar {
  padding: 1px 0 0 4px;
  height: 107px;
  background: #f0f0ee;
  border: 1px solid #ccc;
}
.tb-row { height: 26px; display: flex; align-items: center; }
.ti { flex: none; width: 23.200px; height: 22px; display: flex; align-items: center; justify-content: center; }
.ti svg { width: 20px; height: 20px; display: block; }
.ti.off svg { opacity: .55; }
.ti.active { background: #c2cbe0; border: 1px solid #0a246a; }
.ti.split { width: 31.500px; justify-content: flex-start; padding-left: 2px; }
.drop { margin-left: 3px; border: 3px solid transparent; border-top: 3px solid #000; border-bottom-width: 0; }
.sep { flex: none; width: 1px; height: 16px; margin: 0 3.200px; background: #888; }
.combo {
  flex: none;
  width: 84px;
  height: 21px;
  margin-right: 4px;
  display: flex;
  background: #fff;
  border: 1px solid #ccc;
  font: 11px/17px "Noto Sans", "Open Sans", sans-serif;
  color: #222;
}
.combo:first-of-type { margin-left: 2px; }
.combo-text { flex: 1; padding-left: 3px; }
.combo-arrow {
  position: relative;
  flex: none;
  width: 10px;
  background: #f0f0ee;
  border-left: 1px solid #ccc;
}
.combo-arrow::after {
  content: "";
  position: absolute;
  left: 2px;
  top: 8px;
  border: 3px solid transparent;
  border-top: 3px solid #000;
  border-bottom-width: 0;
}
.editor-body {
  height: 104px;
  padding: 12px 8px 0;
  background: #fff;
  border: 1px solid #ccc;
  border-top: 0;
  color: #2f2f2f;
  font-size: 12.200px;
  white-space: nowrap;
  overflow: hidden;
}
.t-red { color: #ff5a1e; }
.t-yel { background: #ffff33; }
.t-gry { background: #808080; }
.t-grn { background: #00ff33; }

/* Annotations over the form */
.note {
  position: absolute;
  color: #fbb040;
  font: bold 18px/22px "Liberation Sans", sans-serif;
  white-space: nowrap;
}
.n1 { left: 835px; top: 411px; }
.n2 { left: 889px; top: 453px; }
.n3 { left: 942px; top: 500px; }
.arrow { position: absolute; left: 640px; top: 470px; filter: drop-shadow(1px 1px 1px rgba(0,0,0,.25)); }
```
